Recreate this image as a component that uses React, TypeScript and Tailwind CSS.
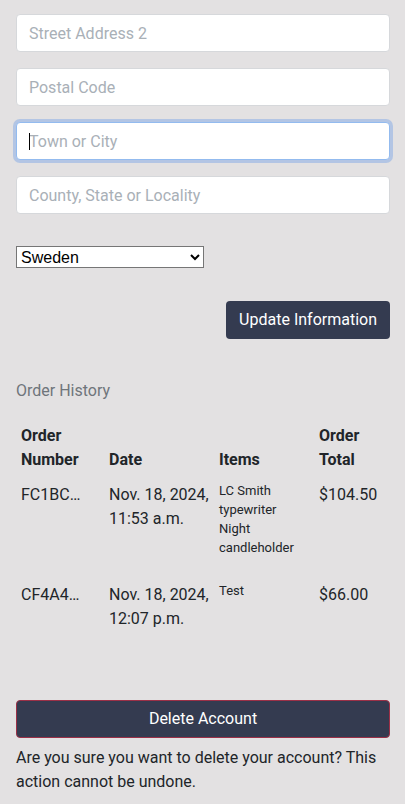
import React from "react";

const font = { fontFamily: "Roboto, 'Liberation Sans', sans-serif" };

function Field({ placeholder, focused }: { placeholder: string; focused?: boolean }) {
  return (
    <div className="relative">
      <input
        readOnly
        placeholder={placeholder}
        className={
          "block h-[38px] w-full rounded-[4px] border bg-white px-[12px] text-[16px] text-[#212529] outline-none placeholder:text-[#a9b0b7] " +
          (focused
            ? "border-[#93bbef] shadow-[0_0_0_3px_rgba(120,165,230,0.45)]"
            : "border-[#d6d8db]")
        }
      />
      {focused && <span className="absolute left-[13px] top-[11px] h-[17px] w-px bg-black" />}
    </div>
  );
}

export default function App() {
  return (
    <div className="min-h-[804px] bg-[#e3e1e2] pl-4 pr-[15px] pt-[14px] text-[#212529]" style={font}>
      <div className="flex flex-col gap-4">
        <Field placeholder="Street Address 2" />
        <Field placeholder="Postal Code" />
        <Field placeholder="Town or City" focused />
        <Field placeholder="County, State or Locality" />
      </div>

      <select
        defaultValue="Sweden"
        className="mt-8 block h-[22px] w-[188px] border border-[#767676] bg-white text-[16px] text-black"
        style={{ fontFamily: "'Liberation Sans', Arial, sans-serif" }}
      >
        <option>Sweden</option>
      </select>

      <div className="mt-[33px] flex justify-end">
        <button className="h-[38px] rounded-[4px] bg-[#343b50] px-[13px] text-[16px] font-normal text-white">
          Update Information
        </button>
      </div>

      <h2 className="mt-[40px] text-[16px] leading-[24px] text-[#6f757b]">Order History</h2>

      <table className="mt-[16px] w-full table-fixed border-collapse text-left">
        <colgroup>
          <col className="w-[88px]" />
          <col className="w-[110px]" />
          <col className="w-[100px]" />
          <col />
        </colgroup>
        <thead>
          <tr className="align-bottom text-[16px] font-bold leading-[24px]">
            <th className="px-[5px] pt-[5px] pb-[6px] font-bold">Order Number</th>
            <th className="px-[5px] pt-[5px] pb-[6px] font-bold">Date</th>
            <th className="px-[5px] pt-[5px] pb-[6px] font-bold">Items</th>
            <th className="px-[5px] pt-[5px] pb-[6px] font-bold">Order Total</th>
          </tr>
        </thead>
        <tbody className="align-top text-[16px] leading-[24px]">
          <tr>
            <td className="px-[5px] py-[5px]">
              <span className="block w-[62px] overflow-hidden text-ellipsis whitespace-nowrap">FC1BC2A9</span>
            </td>
            <td className="px-[5px] py-[5px]">Nov. 18, 2024, 11:53 a.m.</td>
            <td className="px-[5px] pt-[3px] pb-[5px]">
              <ul className="mb-[16px] text-[13px] leading-[19px]">
                <li>LC Smith typewriter</li>
                <li>Night candleholder</li>
              </ul>
            </td>
            <td className="px-[5px] py-[5px]">$104.50</td>
          </tr>
          <tr>
            <td className="px-[5px] py-[5px]">
              <span className="block w-[62px] overflow-hidden text-ellipsis whitespace-nowrap">CF4A4E71</span>
            </td>
            <td className="px-[5px] py-[5px]">Nov. 18, 2024, 12:07 p.m.</td>
            <td className="px-[5px] pt-[3px] pb-[5px]">
              <ul className="mb-[16px] text-[13px] leading-[19px]">
                <li>Test</li>
              </ul>
            </td>
            <td className="px-[5px] py-[5px]">$66.00</td>
          </tr>
        </tbody>
      </table>

      <button className="mt-[64px] h-[38px] w-full rounded-[4px] border border-[#9b3047] bg-[#343b50] text-[16px] font-normal text-white">
        Delete Account
      </button>
      <p className="mt-2 text-[16px] leading-[24px]">
        Are you sure you want to delete your account? This action cannot be undone.
      </p>
    </div>
  );
}
